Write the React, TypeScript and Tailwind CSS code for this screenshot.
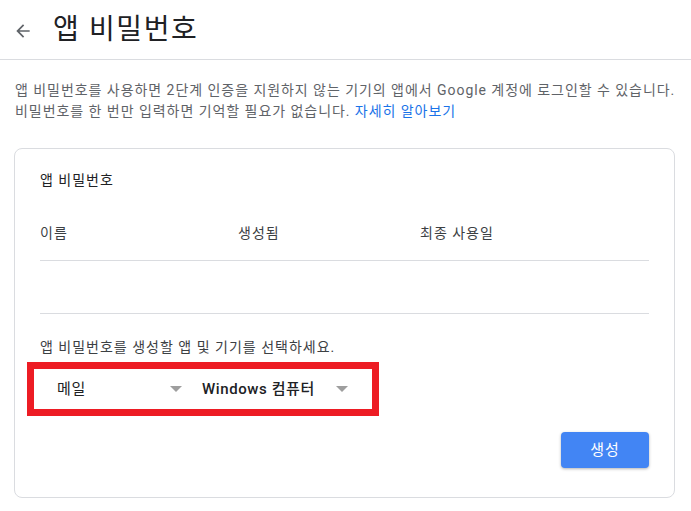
const FONT = { fontFamily: '"Roboto", "Noto Sans CJK KR", sans-serif' };

function Caret() {
  return (
    <svg width="12" height="6" viewBox="0 0 12 6" className="shrink-0">
      <path d="M0 0h12L6 6z" fill="#9e9e9e" />
    </svg>
  );
}

function Dropdown({ label, bold, className }: { label: string; bold?: boolean; className: string }) {
  return (
    <div className={`flex items-center justify-between ${className}`}>
      <span
        className={
          bold
            ? "text-[15px] font-medium tracking-[0.6px] text-[#202124]"
            : "text-[15px] tracking-[0.6px] text-[#202124]"
        }
      >
        {label}
      </span>
      <Caret />
    </div>
  );
}

export default function App() {
  return (
    <div className="min-h-[511px] w-[691px] bg-white" style={FONT}>
      <header className="flex h-[60px] items-center border-b border-[#dadce0] pl-[13px]">
        <svg width="20" height="20" viewBox="0 0 24 24" className="mt-[3px]">
          <path d="M20 11H7.83l5.59-5.59L12 4l-8 8 8 8 1.41-1.41L7.83 13H20v-2z" fill="#5f6368" />
        </svg>
        <h1 className="ml-[20px] text-[28px] leading-none tracking-[1.6px] text-[#202124]">앱 비밀번호</h1>
      </header>

      <p className="mt-[20px] px-[15px] text-[14px] leading-[21px] tracking-[0.95px] text-[#5f6368]">
        앱 비밀번호를 사용하면 2단계 인증을 지원하지 않는 기기의 앱에서 Google 계정에 로그인할 수 있습니다.
        <br />
        비밀번호를 한 번만 입력하면 기억할 필요가 없습니다. <span className="text-[#1a73e8]">자세히 알아보기</span>
      </p>

      <section className="ml-[14px] mt-[26px] w-[661px] rounded-[8px] border border-[#dadce0] px-[25px] pb-[29px] pt-[21px] tracking-[1px]">
        <div className="text-[14px] leading-[21px] text-[#202124]">앱 비밀번호</div>

        <div className="mt-[32px] flex pb-[16px] text-[14px] leading-[21px] text-[#3c4043]">
          <span className="w-[198px]">이름</span>
          <span className="w-[182px]">생성됨</span>
          <span>최종 사용일</span>
        </div>
        <div className="h-[53px] border-t border-[#dadce0]" />
        <div className="border-t border-[#dadce0]" />

        <p className="mt-[23px] text-[14px] leading-[21px] text-[#3c4043]">
          앱 비밀번호를 생성할 앱 및 기기를 선택하세요.
        </p>

        <div className="-ml-[13px] mt-[4px] flex h-[54px] w-[352px] items-center border-[7px] border-[#ed1c24] pl-[23px] tracking-normal">
          <Dropdown label="메일" className="w-[125px]" />
          <Dropdown label="Windows 컴퓨터" bold className="ml-[20px] w-[146px]" />
        </div>

        <div className="mt-[16px] flex justify-end">
          <button className="h-[36px] w-[88px] rounded-[4px] bg-[#4285f4] text-[15px] tracking-[1px] text-white shadow-[0_1px_3px_rgba(0,0,0,0.3)]">
            생성
          </button>
        </div>
      </section>
    </div>
  );
}
